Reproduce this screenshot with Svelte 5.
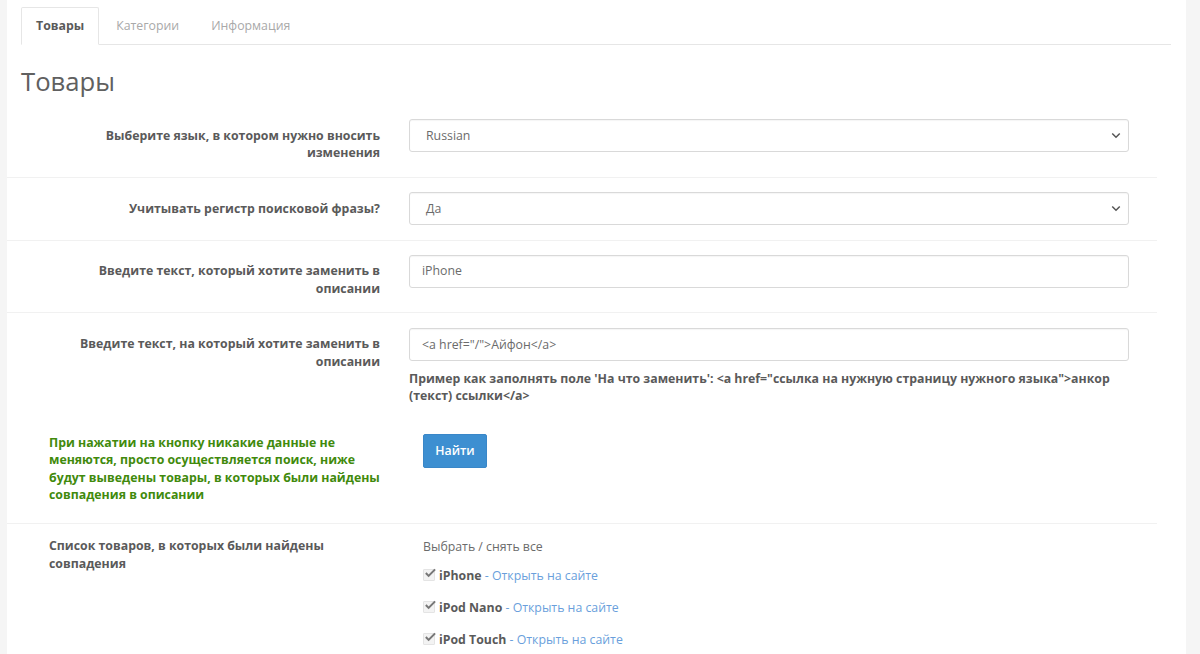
<script>
  const products = [
    { name: 'iPhone' },
    { name: 'iPod Nano' },
    { name: 'iPod Touch' }
  ];
</script>

<div class="page">
  <main class="panel">
    <nav class="tabs">
      <span class="tab active">Товары</span>
      <span class="tab">Категории</span>
      <span class="tab">Информация</span>
    </nav>

    <h1>Товары</h1>

    <div class="rows">
      <div class="row first">
        <div class="label">Выберите язык, в котором нужно вносить изменения</div>
        <div class="field">
          <div class="control select"><span>Russian</span>
            <svg viewBox="0 0 12 8" class="chev"><path d="M1.5 1.5 6 6l4.5-4.5" fill="none" stroke="#555" stroke-width="1.8"/></svg>
          </div>
        </div>
      </div>
      <div class="row">
        <div class="label">Учитывать регистр поисковой фразы?</div>
        <div class="field">
          <div class="control select"><span>Да</span>
            <svg viewBox="0 0 12 8" class="chev"><path d="M1.5 1.5 6 6l4.5-4.5" fill="none" stroke="#555" stroke-width="1.8"/></svg>
          </div>
        </div>
      </div>
      <div class="row">
        <div class="label">Введите текст, который хотите заменить в описании</div>
        <div class="field"><div class="control input">iPhone</div></div>
      </div>
      <div class="row replace">
        <div class="label">Введите текст, на который хотите заменить в описании</div>
        <div class="field">
          <div class="control input">&lt;a href="/"&gt;Айфон&lt;/a&gt;</div>
          <p class="help">Пример как заполнять поле 'На что заменить': &lt;a href="ссылка на нужную страницу нужного языка"&gt;анкор (текст) ссылки&lt;/a&gt;</p>
        </div>
      </div>
      <div class="row noline">
        <div class="label left green">При нажатии на кнопку никакие данные не меняются, просто осуществляется поиск, ниже будут выведены товары, в которых были найдены совпадения в описании</div>
        <div class="field inset"><button class="btn">Найти</button></div>
      </div>
      <div class="row list">
        <div class="label left">Список товаров, в которых были найдены совпадения</div>
        <div class="field inset">
          <div class="all">Выбрать / снять все</div>
          {#each products as p}
            <div class="item">
              <span class="check">
                <svg viewBox="0 0 13 13"><path d="M2 5.5 5 8.5 12 1.5" fill="none" stroke="#777" stroke-width="2.2"/></svg>
              </span>
              <span><b>{p.name}</b> <a href="#top">- Открыть на сайте</a></span>
            </div>
          {/each}
        </div>
      </div>
    </div>
  </main>
</div>

<style>
  :global(html), :global(body) {
    margin: 0;
    height: 654px;
    overflow: hidden;
    background: #f5f5f5;
  }
  .page {
    padding: 0 14px 0 7px;
    font: 12.32px/17.6px "Open Sans", sans-serif;
    color: #666;
  }
  .panel {
    background: #fff;
    padding: 7px 15px 0 14px;
    height: 647px;
    overflow: hidden;
  }
  .tabs {
    display: flex;
    border-bottom: 1px solid #e6e6e6;
    height: 37px;
  }
  .tab {
    padding: 0 14px;
    margin-right: 2px;
    color: #a9a9a9;
    border: 1px solid transparent;
    height: 37px;
    box-sizing: border-box;
    line-height: 35px;
  }
  .tab.active {
    font-weight: 700;
    color: #5a5a5a;
    background: #fff;
    border-color: #e6e6e6 #e6e6e6 #fff;
    border-radius: 2px 2px 0 0;
    height: 38px;
  }
  h1 {
    margin: 22px 0 0;
    font-size: 25.7px;
    line-height: 30px;
    font-weight: 400;
    color: #606060;
  }
  .rows {
    margin: 22px 14px 0 -14px;
  }
  .row {
    display: grid;
    grid-template-columns: 387px 735px;
    padding: 14px 0 14.5px;
    border-top: 1px solid #f1f1f1;
  }
  .row.first {
    border-top: 0;
    padding: 0 0 15.5px;
  }
  .row.replace {
    padding-top: 15px;
  }
  .row.noline {
    border-top: 0;
    padding: 14px 0 18px;
  }
  .row.list {
    padding: 13px 0 0;
  }
  .label {
    padding: 7.5px 14px 0 65px;
    text-align: right;
    font-weight: 700;
    color: #5a5a5a;
  }
  .label.left {
    text-align: left;
    padding: 0 14px 0 42px;
  }
  .label.green {
    color: #418a0c;
    padding-right: 5px;
    padding-top: 0;
    padding-bottom: 1px;
  }
  .field {
    padding-left: 15px;
  }
  .field.inset {
    padding-left: 29px;
  }
  .control {
    box-sizing: border-box;
    height: 33px;
    border: 1px solid #d9d9d9;
    border-radius: 3px;
    background: #fff;
    display: flex;
    align-items: center;
    color: #6b6b6b;
    box-shadow: inset 0 1px 1px rgba(0, 0, 0, 0.04);
  }
  .select {
    padding: 0 7px 0 16px;
    justify-content: space-between;
  }
  .input {
    padding: 0 12px;
  }
  .chev {
    width: 10px;
    height: 7px;
  }
  .help {
    margin: 9px 0 0;
    font-weight: 700;
    color: #5a5a5a;
  }
  .btn {
    margin: 0;
    display: block;
    height: 34px;
    width: 64px;
    padding: 0;
    border: 1px solid #3a87c8;
    border-radius: 2px;
    background: #3d8fd1;
    color: #fff;
    font: 600 12.32px "Open Sans", sans-serif;
  }
  .all {
    color: #6b6b6b;
    margin-top: 1px;
  }
  .item {
    display: flex;
    align-items: center;
    height: 17px;
    margin-top: 15px;
    white-space: pre;
  }
  .all + .item {
    margin-top: 12px;
  }
  .check {
    position: relative;
    width: 12px;
    height: 12px;
    margin-right: 4px;
    border: 1px solid #e4e4e4;
    background: #f3f3f3;
    box-sizing: border-box;
    border-radius: 1px;
    top: -1px;
  }
  .check svg {
    position: absolute;
    left: 0;
    top: -2px;
    width: 12px;
    height: 12px;
  }
  .item b {
    color: #5a5a5a;
  }
  .item a {
    color: #6a9fdc;
    text-decoration: none;
  }
</style>
